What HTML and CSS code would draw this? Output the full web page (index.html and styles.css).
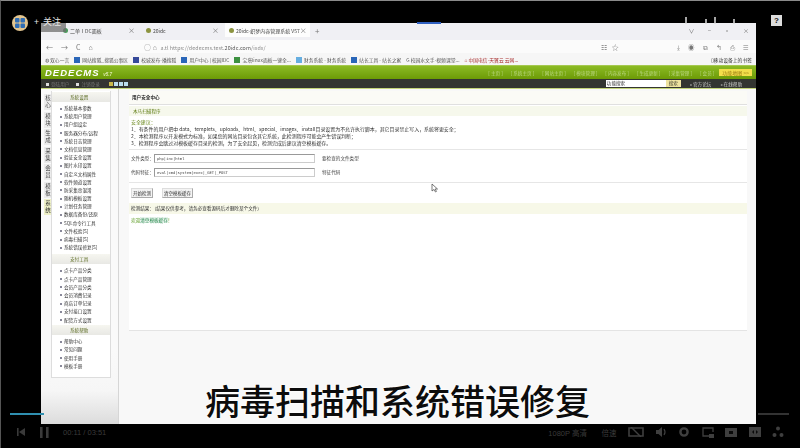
FILE: index.html
```html
<!DOCTYPE html>
<html lang="zh-CN">
<head>
    <meta charset="UTF-8">
    <title>病毒扫描和系统错误修复</title>
    <link rel="stylesheet" href="styles.css">
</head>
<body>
<div class="player">
    <div class="screen">
        <div class="tabs">
            <div class="tab"><span class="tab-ico grey"></span>二单ⅠDC面板<span class="tab-x">×</span></div>
            <div class="tab"><span class="tab-ico olive"></span>20idc<span class="tab-x">×</span></div>
            <div class="tab active"><span class="tab-ico olive"></span>20idc-织梦内容管理系统 V57<span class="tab-x">×</span></div>
            <div class="tab-plus">+</div>
            <div class="win-btns"><span>∨</span><span>−</span><span>▫</span><span>×</span></div>
        </div>
        <div class="address">
            <div class="nav-btns"><span>←</span><span>→</span><span>C</span><span>⌂</span></div>
            <div class="url"><span class="url-ico">○ ⌂</span> a.tl https://dedecms.test.<b>20idc.com</b>/ixdx/</div>
            <div class="addr-right"><span>☷</span><span>☆</span></div>
            <div class="tools"><span>⤓</span><span>◉</span><span>⧉</span><span>↰</span><span>⎙</span><span>≡</span></div>
        </div>
        <div class="bookmarks">
            <span>◍ 双心一言</span>
            <span><i class="bm blue"></i>网站搜狐_搜狐公事区</span>
            <span><i class="bm navy"></i>校城发布-播搜狐</span>
            <span><i class="bm blue"></i>用户中心 | 校园IDC</span>
            <span><i class="bm green"></i>宝塔linux面板一键全...</span>
            <span><i class="bm sky"></i>财务系统 - 财务系统</span>
            <span><i class="bm blue"></i>站长工具 - 站长之家</span>
            <span>G 校园水文手-视频课堂...</span>
            <span class="red">⌂ 中国电信-天翼云 云网...</span>
            <span class="mobile">▯移动设备上的书签</span>
        </div>
        <div class="cms-head">
            <div class="logo">DEDE<span>C</span>MS <small>v5.7</small></div>
            <nav class="cms-nav">
                <span>[ 主页 ]</span><span>[ 系统主页 ]</span><span>[ 网站主页 ]</span><span>[ 模块管理 ]</span><span>[ 内容发布 ]</span><span>[ 生成更新 ]</span><span>[ 采集管理 ]</span><span>[ 会员 ]</span>
                <b>功能地图 &gt;&gt;</b>
            </nav>
        </div>
        <div class="cms-bar">
            <div class="bar-left">
                <span><i class="sq"></i>登陆用户</span>
                <span><i class="sq"></i>注销登录</span>
                <span class="swatches"><i></i><i></i><i></i><i></i></span>
            </div>
            <div class="bar-right">
                <span class="search-box">功能搜索</span><span class="search-btn">搜索</span>
                <span class="bar-link">» 官方论坛</span>
                <span class="bar-link">» 在线帮助</span>
            </div>
        </div>
        <div class="cms-body">
            <div class="side-tabs">
                <span>核<br>心</span><span>模<br>块</span><span>生<br>成</span><span>采<br>集</span><span>会<br>员</span><span>模<br>板</span><span class="on">系<br>统</span>
            </div>
            <div class="side-menu">
                <div class="menu-title">系统设置</div>
                <ul>
                    <li>系统基本参数</li>
                    <li>系统用户管理</li>
                    <li>用户组设定</li>
                    <li>服务器分布/远程</li>
                    <li>系统日志管理</li>
                    <li>文档信息管理</li>
                    <li>验证安全设置</li>
                    <li>图片水印设置</li>
                    <li>自定义文档属性</li>
                    <li>软件频道设置</li>
                    <li>防采集串混淆</li>
                    <li>随机模板设置</li>
                    <li>计划任务管理</li>
                    <li>数据库备份/还原</li>
                    <li>SQL命令行工具</li>
                    <li>文件校验[S]</li>
                    <li>病毒扫描[S]</li>
                    <li>系统错误修复[S]</li>
                </ul>
                <div class="menu-title">支付工具</div>
                <ul>
                    <li>点卡产品分类</li>
                    <li>点卡产品管理</li>
                    <li>会员产品分类</li>
                    <li>会员消费记录</li>
                    <li>商店订单记录</li>
                    <li>支付接口设置</li>
                    <li>配货方式设置</li>
                </ul>
                <div class="menu-title">系统帮助</div>
                <ul>
                    <li>帮助中心</li>
                    <li>常见问题</li>
                    <li>使用手册</li>
                    <li>模板手册</li>
                </ul>
            </div>
            <div class="main">
                <div class="panel">
                    <div class="panel-title">用户安全中心</div>
                    <div class="sub-title">木马扫描程序</div>
                    <div class="tips">
                        <p class="tips-head">安全建议：</p>
                        <p>1．有条件的用户把中 data、templets、uploads、html、special、images、install目录设置为不允许执行脚本，其它目录禁止写入，系统将更安全；</p>
                        <p>2．本检测程序以开发模式为标准，如果您的网站目录包含其它系统，此检测程序可能会产生错误判断；</p>
                        <p>3．检测程序会跳过对模板缓存目录的检测，为了安全起见，检测完成后建议清空模板缓存。</p>
                    </div>
                    <div class="form">
                        <div class="form-row"><label>文件类型：</label><span class="input">php|inc|html</span><span class="hint">要检查的文件类型</span></div>
                        <div class="form-row"><label>代码特征：</label><span class="input">eval|cmd|system|exec|_GET|_POST</span><span class="hint">特征代码</span></div>
                    </div>
                    <div class="buttons">
                        <button>开始检测</button>
                        <button>清空模板缓存</button>
                    </div>
                    <div class="result-head">检测结果：（结果仅供参考，请务必查看源码后才删除某个文件）</div>
                    <div class="result">欢迎<mark>清空模板缓存</mark>！</div>
                </div>
            </div>
        </div>
    </div>

    <!-- video player overlays -->
    <svg class="cursor" width="7" height="10" viewBox="0 0 7 10"><path d="M1 1v7l2-1.500 1.500 2.500 1-.6L4 6h2.500z" fill="#fff" stroke="#444" stroke-width=".7"/></svg>
    <div class="author">
        <svg width="16" height="16" viewBox="0 0 16 16"><circle cx="8" cy="8" r="8" fill="#e2c48e"/><rect x="3" y="3" width="4.500" height="4.500" rx="1" fill="#2f6db5"/><rect x="8.500" y="3" width="4.500" height="4.500" rx="1" fill="#2f6db5"/><rect x="3" y="8.500" width="4.500" height="4.500" rx="1" fill="#2f6db5"/><rect x="8.500" y="8.500" width="4.500" height="4.500" rx="1" fill="#2f6db5"/></svg>
        <span class="follow">+ <span class="follow-label">关注</span></span>
    </div>
    <div class="blue-tick"></div>
    <svg class="ticks" width="60" height="10" viewBox="0 0 60 10"><path d="M2 2v7M22 4v5M31 2v7M50 4v5" stroke="#ddd" stroke-width="1.500"/></svg>
    <div class="help">?</div>
    <div class="subtitle">病毒扫描和系统错误修复</div>
    <div class="progress"><div class="progress-done"></div></div>
    <div class="controls">
        <div class="ctrl-left">
            <svg width="9" height="8" viewBox="0 0 9 8"><path d="M0 0h1.600v8H0zM8 0v8L2 4z" fill="#3a3a3a"/></svg>
            <svg width="9" height="11" viewBox="0 0 9 11"><path d="M0 0h2.600v11H0zM6 0h2.600v11H6z" fill="#3a3a3a"/></svg>
            <span class="time">00:11 / 03:51</span>
        </div>
        <div class="ctrl-right">
            <span class="quality">1080P 高清</span>
            <span class="speed">倍速</span>
            <svg width="16" height="10" viewBox="0 0 16 10"><path d="M1 1h14v8H1z" fill="none" stroke="#3f3f3f" stroke-width="1.600"/><path d="M3 0l10 10" stroke="#3f3f3f" stroke-width="1.400"/></svg>
            <svg width="11" height="10" viewBox="0 0 11 10"><path d="M0 3h2.500L6 0v10L2.500 7H0z" fill="#3f3f3f"/><path d="M8 2q2 3 0 6" fill="none" stroke="#3f3f3f" stroke-width="1.200"/></svg>
            <svg width="12" height="12" viewBox="0 0 12 12"><circle cx="6" cy="6" r="3.600" fill="none" stroke="#3f3f3f" stroke-width="2.400"/></svg>
            <svg width="12" height="11" viewBox="0 0 12 11"><path d="M7 9H1V1h10v4" fill="none" stroke="#3f3f3f" stroke-width="1.300"/><path d="M7 7h5v4H7z" fill="#3f3f3f"/></svg>
            <svg width="12" height="9" viewBox="0 0 12 9"><path d="M0 0h12v9H0z" fill="#3f3f3f"/><path d="M4 3h4v3H4z" fill="#0a0a0a"/></svg>
            <svg width="12" height="10" viewBox="0 0 12 10"><path d="M0 0h12v10H0z" fill="#3f3f3f"/><path d="M3 5l2-2v4zM9 5L7 3v4z" fill="#0a0a0a"/></svg>
            <svg width="12" height="12" viewBox="0 0 12 12"><circle cx="6" cy="2.500" r="2" fill="#3f3f3f"/><circle cx="2.500" cy="9" r="2" fill="#3f3f3f"/><circle cx="9.500" cy="9" r="2" fill="#3f3f3f"/></svg>
        </div>
    </div>
</div>
</body>
</html>
```

FILE: styles.css
```css
* {
    box-sizing: border-box;
}
html, body {
    margin: 0;
    height: 100%;
    background-color: #000;
    overflow: hidden;
}
body {
    font-family: "Noto Sans CJK SC", "Liberation Sans", sans-serif;
}
.player {
    position: relative;
    width: 800px;
    height: 448px;
    padding: 22px 44px 24px 40px;
    border-top: 1px solid #8a8a8a;
    border-left: 1px solid #555;
    background-color: #000;
}
.screen {
    display: flex;
    flex-direction: column;
    height: 100%;
    background-color: #f7f7f7;
    color: #333;
    font-size: 4.600px;
    overflow: hidden;
    filter: blur(0.45px);
}

/* browser chrome */
.tabs {
    display: flex;
    align-items: center;
    height: 17px;
    padding: 0 0 3px 4px;
    background-color: #f0f0f4;
    font-size: 5px;
    white-space: nowrap;
    flex: none;
}
.tab {
    display: flex;
    align-items: center;
    width: 92px;
    height: 14px;
    padding: 0 2px 0 18px;
    color: #444;
}
.tab.active {
    width: 85px;
    padding: 0 7px 0 4px;
    background-color: #fdfdfd;
}
.tab:nth-child(2) {
    padding: 0 6px 0 9px;
    width: 88px;
}
.tab-ico {
    width: 5px;
    height: 5px;
    margin-right: 2px;
    border-radius: 50%;
    flex: none;
}
.grey { background-color: #4b9a5c; }
.olive { background-color: #8c9440; }
.tab-x {
    margin-left: auto;
    color: #777;
    font-size: 7px;
}
.tab-plus {
    margin-left: 5px;
    color: #777;
    font-size: 8px;
}
.win-btns {
    display: flex;
    gap: 13px;
    margin-left: auto;
    padding-right: 7px;
    color: #777;
    font-size: 6px;
}
.address {
    display: flex;
    align-items: center;
    height: 13px;
    padding: 0 5px;
    background-color: #fbfbfb;
    color: #777;
    font-size: 5.300px;
    flex: none;
}
.nav-btns {
    display: flex;
    gap: 8px;
    width: 98px;
    font-size: 7px;
}
.url {
    color: #8a8a8a;
    letter-spacing: 0.1px;
    white-space: nowrap;
}
.url b {
    color: #555;
    font-weight: normal;
}
.url-ico {
    font-size: 7px;
    margin-right: 2px;
}
.addr-right {
    display: flex;
    gap: 5px;
    margin-left: 335px;
    font-size: 7px;
}
.tools {
    display: flex;
    gap: 8px;
    margin-left: auto;
    padding-right: 2px;
    font-size: 6.500px;
}
.bookmarks {
    display: flex;
    align-items: center;
    gap: 5px;
    height: 12px;
    padding: 0 4px;
    background-color: #f6f6f6;
    color: #555;
    font-size: 4.800px;
    white-space: nowrap;
    flex: none;
}
.bm {
    display: inline-block;
    width: 6px;
    height: 6px;
    margin-right: 2px;
    vertical-align: -1px;
}
.blue { background-color: #2a66b8; }
.navy { background-color: #364a9a; }
.green { background-color: #3d9140; }
.sky { background-color: #66aee0; }
.red { color: #a33; }
.mobile {
    margin-left: auto;
    color: #333;
}

/* dede header */
.cms-head {
    display: flex;
    align-items: center;
    justify-content: space-between;
    height: 14px;
    padding: 0 4px;
    background: linear-gradient(#8cbb24, #6c9a06);
    border-top: 1px solid #a5c84f;
    flex: none;
}
.logo {
    color: #fff;
    font-family: "Liberation Sans", sans-serif;
    font-size: 9.500px;
    font-weight: bold;
    font-style: italic;
    letter-spacing: 1px;
}
.logo small {
    font-size: 4.500px;
    color: #d9e9a8;
    letter-spacing: 0;
}
.cms-nav {
    display: flex;
    align-items: center;
    gap: 8px;
    color: #bcd884;
    white-space: nowrap;
}
.cms-nav b {
    padding: 0 3px;
    background-color: #f3de4a;
    color: #9a7a10;
    font-weight: normal;
    font-size: 5px;
    margin-left: -3px;
}
.cms-bar {
    display: flex;
    align-items: center;
    justify-content: space-between;
    height: 10px;
    padding: 0 5px;
    background-color: #333531;
    border-bottom: 1px solid #c4d47a;
    color: #bbb;
    flex: none;
}
.bar-left, .bar-right {
    display: flex;
    align-items: center;
}
.bar-left {
    gap: 7px;
    color: #777;
}
.sq {
    display: inline-block;
    width: 3px;
    height: 3px;
    margin-right: 2px;
    background-color: #ddd;
}
.swatches {
    display: flex;
    gap: 1px;
    margin-left: 2px;
}
.swatches i {
    width: 4px;
    height: 4px;
    background-color: #bde;
}
.swatches i:first-child {
    background-color: #c8b84a;
}
.search-box {
    width: 60px;
    height: 7px;
    line-height: 7px;
    padding-left: 1px;
    background-color: #fff;
    color: #333;
}
.search-btn {
    width: 15px;
    height: 7px;
    line-height: 7px;
    text-align: center;
    background-color: #eee3a0;
    color: #443;
}
.bar-link {
    margin-left: 9px;
    color: #ccc;
}
.bar-right {
    padding-right: 9px;
}

/* dede body */
.cms-body {
    display: flex;
    flex: 1;
    min-height: 0;
    background: linear-gradient(#fafafa 78%, #f6f6f6 90%, #dcdcdc 100%);
}
.side-tabs {
    display: flex;
    flex-direction: column;
    gap: 1.500px;
    width: 11px;
    padding: 5px 0 0 3px;
    flex: none;
}
.side-tabs span {
    width: 8px;
    height: 16px;
    padding-top: 1px;
    font-size: 5.500px;
    line-height: 7px;
    text-align: center;
    background-color: #ececec;
    color: #444;
}
.side-tabs .on {
    background-color: #eef0c8;
    color: #333;
}
.side-menu {
    align-self: flex-start;
    width: 59px;
    margin-top: 2px;
    padding-bottom: 5px;
    background-color: #fff;
    border-right: 1px solid #ddd;
    border-bottom: 1px solid #ddd;
    box-shadow: -1px 0 0 #ddd;
}
.menu-title {
    height: 10px;
    line-height: 10px;
    padding-left: 18px;
    margin: 1px 0 0;
    background: linear-gradient(#f6f6f0, #e8e8e4);
    color: #5a6a20;
}
.side-menu ul {
    list-style: none;
    margin: 0;
    padding: 2px 0 2px 12px;
}
.side-menu ul:nth-of-type(2) {
    padding-bottom: 0.500px;
}
.side-menu li {
    position: relative;
    height: 8.200px;
    line-height: 8.200px;
    color: #333;
    white-space: nowrap;
}
.side-menu li::before {
    content: "";
    position: absolute;
    left: -4px;
    top: 3.500px;
    width: 2px;
    height: 2px;
    background-color: #889;
}
.main {
    flex: 1;
    padding: 0 9px 0 10px;
    margin-left: 7px;
    border-left: 1px solid #d6d6d6;
    background-color: #f8f8f8;
}
.panel {
    height: 240px;
    margin-top: 2px;
    background-color: #fff;
    border-bottom: 1px solid #e4e4e4;
}
.panel-title {
    height: 14px;
    line-height: 13px;
    padding-left: 3px;
    background-color: #fbfbf6;
    border-bottom: 1px solid #e0e0e0;
    color: #222;
    font-weight: bold;
}
.sub-title {
    height: 10px;
    line-height: 10px;
    margin-top: 1px;
    padding-left: 4px;
    background-color: #f6f8ec;
    color: #5d7a10;
}
.tips {
    padding: 2px 2px 3px;
    font-size: 4.950px;
    line-height: 7px;
    border-bottom: 1px solid #e6e6e6;
    white-space: nowrap;
}
.tips p {
    margin: 0;
}
.tips-head {
    color: #6d8a20;
}
.form {
    padding: 1px 0 3px;
    border-bottom: 1px solid #e6e6e6;
}
.form-row {
    display: flex;
    align-items: center;
    height: 14px;
    padding-left: 2px;
    color: #444;
    white-space: nowrap;
}
.form-row label {
    width: 23px;
}
.input {
    width: 161px;
    height: 9px;
    line-height: 7px;
    padding-left: 2px;
    background-color: #fff;
    border: 1px solid #ccc;
    border-top-color: #999;
    border-left-color: #999;
    font-family: "DejaVu Sans Mono", monospace;
    font-size: 3.800px;
}
.hint {
    margin-left: 7px;
}
.buttons {
    display: flex;
    gap: 9px;
    height: 19px;
    align-items: center;
    padding-left: 2px;
}
.buttons button {
    height: 10px;
    padding: 0 1px;
    background-color: #f4f4f4;
    border: 1px solid #ddd;
    border-right-color: #aaa;
    border-bottom-color: #aaa;
    color: #333;
    font-family: inherit;
    font-size: 4.500px;
    line-height: 8px;
}
.result-head {
    height: 11px;
    line-height: 11px;
    margin-top: 1px;
    padding-left: 2px;
    background-color: #f7f8e8;
    color: #333;
}
.result {
    padding: 3px 2px;
    color: #5a9a20;
}
.result mark {
    background-color: #eaf5ee;
    color: #2a8a50;
}

/* player overlays */
.cursor {
    position: absolute;
    left: 430px;
    top: 182px;
}
.author {
    position: absolute;
    left: 11px;
    top: 14px;
    display: flex;
    gap: 6px;
}
.follow {
    height: 12px;
    margin-top: 1px;
    color: #e4e4e4;
    font-size: 9px;
    line-height: 12px;
    white-space: nowrap;
}
.follow-label {
    display: inline-block;
    padding: 0 5px 4px 2px;
    background: linear-gradient(transparent 45%, rgba(110, 110, 110, 0.75) 45%);
}
.blue-tick {
    position: absolute;
    left: 416px;
    top: 21px;
    width: 24px;
    height: 2px;
    background-color: #2f5fc0;
}
.ticks {
    position: absolute;
    left: 683px;
    top: 14px;
}
.help {
    position: absolute;
    left: 770px;
    top: 14px;
    width: 11px;
    height: 11px;
    background-color: #ddd;
    color: #111;
    font-family: "Liberation Sans", sans-serif;
    font-size: 8px;
    font-weight: bold;
    line-height: 11px;
    text-align: center;
}
.subtitle {
    position: absolute;
    left: 204px;
    top: 376px;
    color: #0c0c0c;
    font-size: 35px;
    font-weight: 500;
    line-height: 46px;
    white-space: nowrap;
    text-shadow: 0 0 3px #fff, 0 0 3px #fff;
}
.progress {
    position: absolute;
    left: 9px;
    top: 412px;
    width: 779px;
    height: 2px;
    background: linear-gradient(90deg, transparent 0 96%, #333 96%);
}
.progress-done {
    width: 34px;
    height: 2px;
    background-color: #2f8fb0;
}
.controls {
    position: absolute;
    left: 0;
    right: 0;
    top: 423px;
    height: 16px;
    display: flex;
    align-items: center;
    justify-content: space-between;
    padding: 0 16px;
    color: #3a3a3a;
    font-size: 7.500px;
}
.ctrl-left, .ctrl-right {
    display: flex;
    align-items: center;
}
.ctrl-left {
    gap: 14px;
}
.time {
    font-family: "Liberation Sans", sans-serif;
}
.ctrl-right {
    gap: 11.500px;
}
.quality {
    margin-right: 3px;
    font-family: "Liberation Sans", "Noto Sans CJK SC", sans-serif;
    white-space: nowrap;
}
```
